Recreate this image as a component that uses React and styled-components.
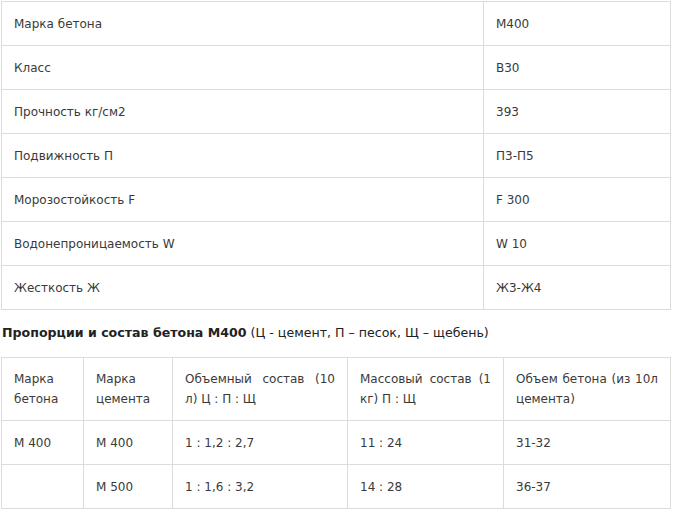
import React from "react";
import styled, { createGlobalStyle } from "styled-components";

const GlobalStyle = createGlobalStyle`
  body {
    margin: 0;
    background: #fff;
    font-family: "DejaVu Sans", Verdana, sans-serif;
    font-size: 12px;
    color: #333;
  }
`;

const props1 = [
  ["Марка бетона", "М400"],
  ["Класс", "В30"],
  ["Прочность кг/см2", "393"],
  ["Подвижность П", "П3-П5"],
  ["Морозостойкость F", "F 300"],
  ["Водонепроницаемость W", "W 10"],
  ["Жесткость Ж", "Ж3-Ж4"]
];

const cols2 = [82, 89, 175, 156, 167];

const head2 = [
  "Марка бетона",
  "Марка цемента",
  "Объемный состав (10 л) Ц : П : Щ",
  "Массовый состав (1 кг) П : Щ",
  "Объем бетона (из 10л цемента)"
];

const rows2 = [
  ["М 400", "М 400", "1 : 1,2 : 2,7", "11 : 24", "31-32"],
  ["", "М 500", "1 : 1,6 : 3,2", "14 : 28", "36-37"]
];

export default function App() {
  return (
    <Page>
      <GlobalStyle />
      <Table>
        <colgroup>
          <col style={{ width: 482 }} />
          <col />
        </colgroup>
        <tbody>
          {props1.map(([k, v], i) => (
            <tr key={i}>
              <Cell>{k}</Cell>
              <Cell>{v}</Cell>
            </tr>
          ))}
        </tbody>
      </Table>
      <Heading>
        <b>Пропорции и состав бетона М400</b> (Ц - цемент, П – песок, Щ –
        щебень)
      </Heading>
      <Table>
        <colgroup>
          {cols2.map((w, i) => (
            <col key={i} style={{ width: w }} />
          ))}
        </colgroup>
        <tbody>
          <tr>
            {head2.map((h, i) => (
              <HeadCell key={i}>{h}</HeadCell>
            ))}
          </tr>
          {rows2.map((r, i) => (
            <tr key={i}>
              {r.map((c, j) => (
                <Cell key={j}>{c}</Cell>
              ))}
            </tr>
          ))}
        </tbody>
      </Table>
    </Page>
  );
}

const Page = styled.div`
  padding: 1px;
  width: 670px;
`;

const Table = styled.table`
  width: 670px;
  border-collapse: collapse;
  table-layout: fixed;
`;

const Cell = styled.td`
  height: 44px;
  box-sizing: border-box;
  border: 1px solid #dcdcdc;
  padding: 0 12px;
  vertical-align: middle;
  line-height: 20px;
  font-size: 12px;
  color: #3a3a3a;
`;

const HeadCell = styled(Cell)`
  height: 63px;
  text-align: justify;
`;

const Heading = styled.div`
  margin: 13px 0 14px 1px;
  line-height: 20px;
  font-size: 12.6px;
  color: #222;
  white-space: nowrap;

  b {
    font-weight: bold;
  }
`;
